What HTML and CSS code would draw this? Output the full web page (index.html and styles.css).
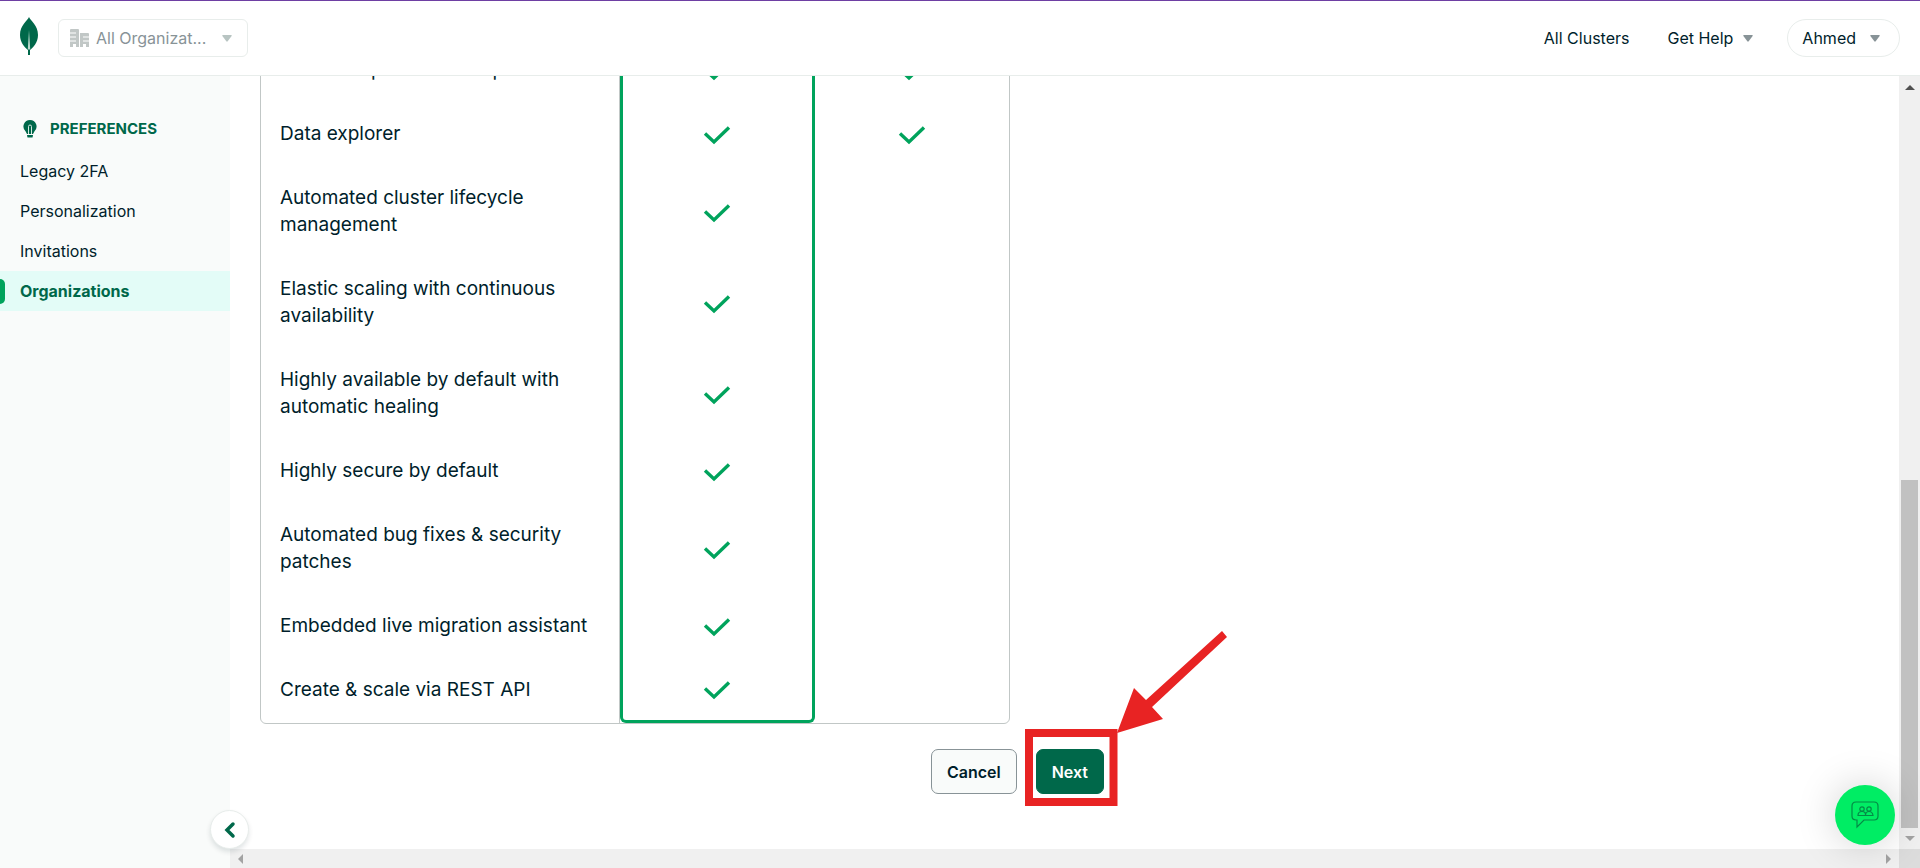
FILE: index.html
```html
<!DOCTYPE html>
<html lang="en">
<head>
<meta charset="utf-8">
<meta name="viewport" content="width=device-width, initial-scale=1">
<title>Organizations</title>
<link rel="stylesheet" href="styles.css">
</head>
<body>
<svg class="defs" aria-hidden="true">
  <symbol id="check" viewBox="0 0 28 20"><path d="M2 8.500 L11 17 L26 2.500" fill="none" stroke="#00a35c" stroke-width="3.400"/></symbol>
  <symbol id="caret" viewBox="0 0 10 7"><path d="M1 0H9Q10.300 0 9.600 1.100L5.700 6.300Q5 7.200 4.300 6.300L.4 1.100Q-.3 0 1 0Z" fill="currentColor"/></symbol>
</svg>
<div class="app">
  <header class="topbar">
    <a class="logo" href="#" aria-label="Home">
      <svg width="18" height="38" viewBox="0 0 18 38"><path d="M9 0C10.500 4 18 8 18 18C18 26 13 30.500 10 33V38H8V33C5 30.500 0 26 0 18C0 8 7.500 4 9 0Z" fill="#00684a"/><path d="M9 13L10.200 32.500H7.800Z" fill="#b8d8cc"/></svg>
    </a>
    <div class="org">
      <svg class="org-icon" width="19" height="18" viewBox="0 0 19 18" aria-hidden="true"><path d="M1 0H8Q9 0 9 1V18H6V15H3V18H0V1Q0 0 1 0ZM10 4H18Q19 4 19 5V18H16V15H13V18H10Z" fill="#c1c7c6"/><path d="M0 4H6M0 8H6M0 12H6M13 8H19M13 12H19" stroke="#fff"/></svg>
      <select class="org-select" aria-label="Organization"><option>All Organizat...</option></select>
      <svg class="caret org-caret" aria-hidden="true"><use href="#caret"/></svg>
    </div>
    <nav class="topnav" aria-label="Account">
      <a class="toplink" href="#">All Clusters</a>
      <button class="menu" type="button">Get Help <svg class="caret"><use href="#caret"/></svg></button>
      <button class="menu user" type="button">Ahmed <svg class="caret"><use href="#caret"/></svg></button>
    </nav>
  </header>

  <aside class="sidebar">
    <h2 class="side-title"><svg width="14" height="18" viewBox="0 0 14 18" aria-hidden="true"><path d="M7 0A6.500 6.500 0 0 1 11.500 11.200L10 14H4L2.500 11.200A6.500 6.500 0 0 1 7 0Z" fill="#00684a"/><path d="M5.500 14V6.500Q5.500 5 7 5T8.500 6.500V14" fill="none" stroke="#d5e8e0"/><path d="M4 15H10L9.500 17.500H4.500Z" fill="#00684a"/></svg>PREFERENCES</h2>
    <nav class="side-nav" aria-label="Preferences">
      <a href="#">Legacy 2FA</a>
      <a href="#">Personalization</a>
      <a href="#">Invitations</a>
      <a href="#" class="active" aria-current="page">Organizations</a>
    </nav>
    <button class="collapse" type="button" aria-label="Collapse sidebar"><svg width="12" height="18" viewBox="0 0 12 18"><path d="M9 3L3 9L9 15" fill="none" stroke="#00684a" stroke-width="3.500" stroke-linecap="round"/></svg></button>
  </aside>

  <main class="content">
    <div class="plans">
      <table class="features">
        <tbody>
          <tr><th scope="row">Real-time performance panel</th><td class="pick"><svg class="check"><use href="#check"/></svg></td><td><svg class="check"><use href="#check"/></svg></td></tr>
          <tr><th scope="row">Data explorer</th><td class="pick"><svg class="check"><use href="#check"/></svg></td><td><svg class="check"><use href="#check"/></svg></td></tr>
          <tr><th scope="row">Automated cluster lifecycle management</th><td class="pick"><svg class="check"><use href="#check"/></svg></td><td></td></tr>
          <tr><th scope="row">Elastic scaling with continuous availability</th><td class="pick"><svg class="check"><use href="#check"/></svg></td><td></td></tr>
          <tr><th scope="row">Highly available by default with automatic healing</th><td class="pick"><svg class="check"><use href="#check"/></svg></td><td></td></tr>
          <tr><th scope="row">Highly secure by default</th><td class="pick"><svg class="check"><use href="#check"/></svg></td><td></td></tr>
          <tr><th scope="row">Automated bug fixes &amp; security patches</th><td class="pick"><svg class="check"><use href="#check"/></svg></td><td></td></tr>
          <tr><th scope="row">Embedded live migration assistant</th><td class="pick"><svg class="check"><use href="#check"/></svg></td><td></td></tr>
          <tr><th scope="row">Create &amp; scale via REST API</th><td class="pick"><svg class="check"><use href="#check"/></svg></td><td></td></tr>
        </tbody>
      </table>
      <div class="actions">
        <button class="btn" type="button">Cancel</button>
        <div class="marked">
          <button class="btn primary" type="button">Next</button>
          <svg class="marker" width="204" height="178" viewBox="0 0 204 178" aria-hidden="true"><rect x="4" y="103" width="84.500" height="69" fill="none" stroke="#e82323" stroke-width="8"/><path d="M197 1L202 7L127 77L138 89L92 103L109 58L121 70Z" fill="#e82323"/></svg>
        </div>
      </div>
    </div>
  </main>

  <div class="vbar" aria-hidden="true">
    <svg width="10" height="5" viewBox="0 0 10 5"><path d="M0 5L5 0L10 5Z" fill="#505050"/></svg>
    <div class="thumb"></div>
    <svg width="10" height="5" viewBox="0 0 10 5"><path d="M0 0L5 5L10 0Z" fill="#a3a3a3"/></svg>
  </div>
  <div class="hbar" aria-hidden="true">
    <svg width="5" height="10" viewBox="0 0 5 10"><path d="M5 0L0 5L5 10Z" fill="#a3a3a3"/></svg>
    <svg width="5" height="10" viewBox="0 0 5 10"><path d="M0 0L5 5L0 10Z" fill="#a3a3a3"/></svg>
  </div>
  <div class="corner"></div>
</div>
<button class="chat" type="button" aria-label="Open chat"><svg width="28" height="28" viewBox="0 0 28 28" fill="none" stroke="#048a46" stroke-width="1.200"><path d="M5 1H23Q27 1 27 5V15Q27 19 23 19H13L6 26V19H5Q1 19 1 15V5Q1 1 5 1Z"/><circle cx="11" cy="8" r="2.200"/><circle cx="18" cy="8" r="2.200"/><path d="M7 14.500Q7 10.500 11 10.500T14.500 14.500ZM14.500 14.500Q14.500 10.500 18 10.500T22 14.500Z"/></svg></button>
</body>
</html>
```
FILE: styles.css
```css
* { box-sizing: border-box; }
body {
  margin: 0;
  font: 16px/20px Inter, "Open Sans", sans-serif;
  color: #001e2b;
  background: #fff;
}
button, select { font: inherit; color: inherit; }
a { color: inherit; text-decoration: none; }
svg { display: block; }
.defs { position: absolute; width: 0; height: 0; }

.app {
  display: grid;
  grid-template: 76px 1fr 19px / 230px 1fr 21px;
  height: 100vh;
}

.topbar {
  grid-column: 1 / -1;
  display: flex;
  align-items: center;
  padding: 0 20px;
  border-top: 1px solid #6e3fa3;
  border-bottom: 1px solid #e8edeb;
}
.logo { margin: 0 20px 4px 0; }
.org { position: relative; }
.org-select {
  appearance: none;
  width: 190px;
  height: 38px;
  padding: 0 30px 0 37px;
  border: 1px solid #e8edeb;
  border-radius: 6px;
  background: #fff;
  color: #889397;
}
.org-icon { position: absolute; left: 12px; top: 10px; }
.caret { width: 10px; height: 7px; color: #889397; }
.org-caret {
  position: absolute;
  right: 16px;
  top: 16px;
  color: #b8c4c2;
}
.topnav {
  display: flex;
  align-items: center;
  gap: 34px;
  margin-left: auto;
}
.toplink { margin-right: 4px; }
.menu {
  display: flex;
  align-items: center;
  gap: 10px;
  padding: 0;
  border: 0;
  background: none;
}
.user {
  height: 38px;
  gap: 14px;
  padding: 0 19px 0 14px;
  border: 1px solid #e8edeb;
  border-radius: 20px;
}

.sidebar {
  position: relative;
  grid-row: 2 / 4;
  padding-top: 43px;
  background: #f9fbfa;
}
.side-title {
  display: flex;
  align-items: center;
  gap: 13px;
  margin: 0 0 12px;
  padding-left: 23px;
  font-size: 15px;
  font-weight: 700;
  color: #00684a;
}
.side-nav a {
  display: flex;
  align-items: center;
  height: 40px;
  padding-left: 20px;
}
.side-nav .active {
  gap: 15px;
  padding-left: 0;
  background: #e3fcf7;
  color: #00684a;
  font-weight: 700;
}
.active::before {
  content: "";
  width: 5px;
  height: 25px;
  border-radius: 0 5px 5px 0;
  background: #00a35c;
}
.collapse {
  position: absolute;
  right: -19px;
  bottom: 19px;
  display: grid;
  place-items: center;
  width: 39px;
  height: 39px;
  padding: 0;
  border: 1px solid #e8edeb;
  border-radius: 50%;
  background: #fff;
  box-shadow: 0 3px 5px rgba(0, 30, 43, .12);
}

.content {
  display: flex;
  flex-direction: column;
  justify-content: flex-end;
  overflow: hidden;
  padding: 0 30px 55px;
}
.plans { width: 844px; max-width: 100%; }
.features {
  width: 750px;
  table-layout: fixed;
  border: 1px solid #c1c7c6;
  border-radius: 6px;
  border-spacing: 0;
  font-size: 19px;
  line-height: 27px;
}
.features th {
  width: 359px;
  padding: 17px 20px 20px 19px;
  border-right: 1px solid #c1c7c6;
  font-weight: 400;
  text-align: left;
}
.features td { padding: 0; }
.pick {
  border: solid #00a35c;
  border-width: 0 3px;
}
tr:last-child .pick {
  border-bottom-width: 3px;
  border-radius: 0 0 6px 6px;
}
.check { width: 28px; height: 20px; margin: 0 auto; }

.actions {
  display: flex;
  justify-content: flex-end;
  gap: 19px;
  margin-top: 25px;
}
.btn {
  height: 45px;
  padding: 0 15px;
  border: 1px solid #889397;
  border-radius: 7px;
  background: #f9fbfa;
  font-weight: 600;
}
.primary {
  border-color: #00684a;
  background: #00684a;
  color: #fff;
}
.marked { position: relative; }
.marker { position: absolute; left: -11px; bottom: -14px; pointer-events: none; }

.vbar {
  display: flex;
  flex-direction: column;
  align-items: center;
  justify-content: space-between;
  padding: 9px 0 8px;
  background: #f0f0f0;
}
.thumb {
  width: 17px;
  height: 46%;
  margin: auto 0 8px;
  background: #c1c1c1;
}
.hbar {
  grid-column: 2;
  display: flex;
  align-items: center;
  justify-content: space-between;
  padding: 0 8px;
  background: #f0f0f0;
}
.corner { background: #dcdcdc; }
.chat {
  position: fixed;
  right: 25px;
  bottom: 23px;
  display: grid;
  place-items: center;
  width: 60px;
  height: 60px;
  padding: 0;
  border: 0;
  border-radius: 50%;
  background: #00ed64;
  box-shadow: 0 0 40px rgba(0, 0, 0, .18);
}
```
